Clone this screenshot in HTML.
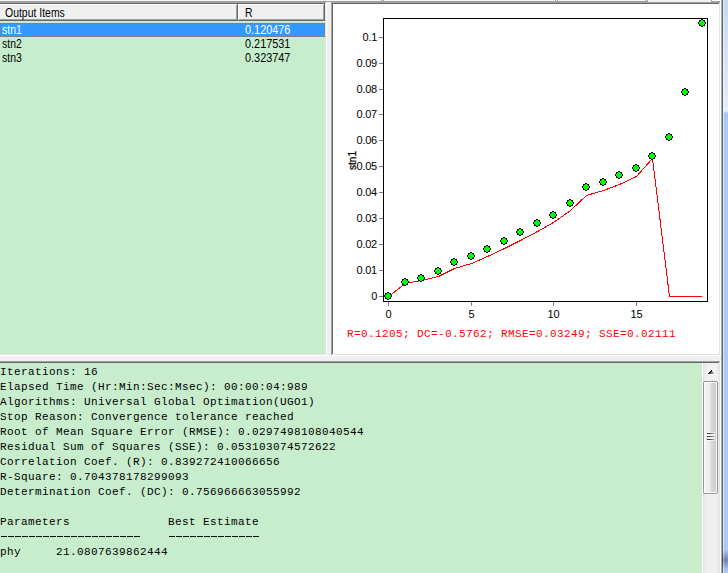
<!DOCTYPE html>
<html><head><meta charset="utf-8"><title>Output</title>
<style>
html,body{margin:0;padding:0;}
body{width:728px;height:573px;overflow:hidden;background:#f0f0f0;position:relative;font-family:"Liberation Sans",sans-serif;}
div{position:absolute;}
.ls{font-family:"Liberation Sans",sans-serif;font-size:11px;line-height:14px;white-space:pre;color:#000;transform-origin:0 0;transform:scale(0.99,1.13);}
.hd{transform:scale(0.95,1.13);}
.nm{transform:scale(0.95,1.13);}
.mono{font-family:"Liberation Mono",monospace;font-size:11px;line-height:15px;letter-spacing:0.4px;white-space:pre;color:#000;margin:0;}
svg{position:absolute;left:0;top:0;}
svg text{font-family:"Liberation Sans",sans-serif;font-size:11px;fill:#000;}
</style></head><body>

<div style="left:0px;top:0px;width:648px;height:1px;background:#f6f6f6"></div>
<div style="left:648px;top:0px;width:80px;height:2px;background:#f0f0f0"></div>
<div style="left:0px;top:1px;width:648px;height:1px;background:#a0a0a0"></div>
<div style="left:648px;top:1px;width:80px;height:1px;background:#f0f0f0"></div>
<div style="left:381px;top:0px;width:1px;height:1px;background:#9a9a9a"></div>
<div style="left:383px;top:0px;width:1px;height:1px;background:#9a9a9a"></div>
<div style="left:555px;top:0px;width:1px;height:1px;background:#9a9a9a"></div>
<div style="left:557px;top:0px;width:1px;height:1px;background:#9a9a9a"></div>
<div style="left:645px;top:0px;width:1px;height:1px;background:#9a9a9a"></div>
<div style="left:647px;top:0px;width:1px;height:2px;background:#9a9a9a"></div>
<div style="left:711px;top:0px;width:1px;height:1px;background:#a0a0a0"></div>
<div style="left:711px;top:1px;width:9px;height:1px;background:#a0a0a0"></div>
<div style="left:712px;top:0px;width:9px;height:1px;background:#ffffff"></div>
<div style="left:720px;top:1px;width:1px;height:1px;background:#ffffff"></div>
<div style="left:0px;top:2px;width:327px;height:1px;background:#a0a0a0"></div>
<div style="left:0px;top:3px;width:326px;height:1px;background:#696969"></div>
<div style="left:0px;top:4px;width:325px;height:350px;background:#c7edcc"></div>
<div style="left:325px;top:3px;width:1px;height:352px;background:#e3e3e3"></div>
<div style="left:326px;top:2px;width:1px;height:354px;background:#ffffff"></div>
<div style="left:0px;top:354px;width:326px;height:1px;background:#e3e3e3"></div>
<div style="left:0px;top:355px;width:327px;height:1px;background:#ffffff"></div>
<div style="left:0px;top:4px;width:238px;height:17px;background:#f0f0f0"></div>
<div style="left:0px;top:4px;width:237px;height:1px;background:#ffffff"></div>
<div style="left:0px;top:19px;width:237px;height:1px;background:#a0a0a0"></div>
<div style="left:236px;top:5px;width:1px;height:15px;background:#a0a0a0"></div>
<div style="left:0px;top:20px;width:238px;height:1px;background:#696969"></div>
<div style="left:237px;top:4px;width:1px;height:17px;background:#696969"></div>
<div style="left:238px;top:4px;width:87px;height:17px;background:#f0f0f0"></div>
<div style="left:238px;top:4px;width:86px;height:1px;background:#ffffff"></div>
<div style="left:238px;top:4px;width:1px;height:16px;background:#ffffff"></div>
<div style="left:239px;top:19px;width:85px;height:1px;background:#a0a0a0"></div>
<div style="left:323px;top:5px;width:1px;height:15px;background:#a0a0a0"></div>
<div style="left:238px;top:20px;width:87px;height:1px;background:#696969"></div>
<div style="left:324px;top:4px;width:1px;height:17px;background:#696969"></div>
<div class="ls hd" style="left:5px;top:5px;">Output Items</div>
<div class="ls hd" style="left:245px;top:5px;">R</div>
<div style="left:0px;top:23px;width:325px;height:14px;background:#3399ff"></div>
<svg width="325" height="40" style="left:0;top:0" shape-rendering="crispEdges"><defs><pattern id="chk" x="0" y="0" width="2" height="2" patternUnits="userSpaceOnUse"><rect x="1" y="0" width="1" height="1" fill="#cc6600"/><rect x="0" y="1" width="1" height="1" fill="#cc6600"/></pattern></defs><path fill="url(#chk)" fill-rule="evenodd" d="M0 23h325v14h-325z M1 24h323v12h-323z"/></svg>
<div class="ls nm" style="left:2px;top:22px;color:#fff">stn1</div>
<div class="ls" style="left:245px;top:22px;color:#fff">0.120476</div>
<div class="ls nm" style="left:2px;top:36px;color:#000">stn2</div>
<div class="ls" style="left:245px;top:36px;color:#000">0.217531</div>
<div class="ls nm" style="left:2px;top:50px;color:#000">stn3</div>
<div class="ls" style="left:245px;top:50px;color:#000">0.323747</div>
<div style="left:331px;top:2px;width:389px;height:1px;background:#a0a0a0"></div>
<div style="left:331px;top:2px;width:1px;height:354px;background:#a0a0a0"></div>
<div style="left:332px;top:3px;width:388px;height:1px;background:#696969"></div>
<div style="left:332px;top:3px;width:1px;height:352px;background:#696969"></div>
<div style="left:333px;top:4px;width:386px;height:350px;background:#ffffff"></div>
<div style="left:719px;top:3px;width:1px;height:352px;background:#e3e3e3"></div>
<div style="left:332px;top:354px;width:388px;height:1px;background:#e3e3e3"></div>
<div style="left:720px;top:1px;width:1px;height:355px;background:#ffffff"></div>
<div style="left:331px;top:355px;width:390px;height:1px;background:#ffffff"></div>
<svg width="728" height="360" viewBox="0 0 728 360">
<g shape-rendering="crispEdges">
<rect x="383.5" y="18.5" width="324" height="283" fill="none" stroke="#000" stroke-width="1"/>
<rect x="379" y="296" width="4" height="1" fill="#808080"/>
<rect x="379" y="270" width="4" height="1" fill="#808080"/>
<rect x="379" y="244" width="4" height="1" fill="#808080"/>
<rect x="379" y="218" width="4" height="1" fill="#808080"/>
<rect x="379" y="192" width="4" height="1" fill="#808080"/>
<rect x="379" y="166" width="4" height="1" fill="#808080"/>
<rect x="379" y="140" width="4" height="1" fill="#808080"/>
<rect x="379" y="114" width="4" height="1" fill="#808080"/>
<rect x="379" y="89" width="4" height="1" fill="#808080"/>
<rect x="379" y="63" width="4" height="1" fill="#808080"/>
<rect x="379" y="37" width="4" height="1" fill="#808080"/>
<rect x="388" y="302" width="1" height="4" fill="#808080"/>
<rect x="471" y="302" width="1" height="4" fill="#808080"/>
<rect x="553" y="302" width="1" height="4" fill="#808080"/>
<rect x="636" y="302" width="1" height="4" fill="#808080"/>
<polyline fill="none" stroke="#ff0000" stroke-width="1" points="388.5,296.5 405.5,283.5 421.5,280.5 438.5,276.5 454.5,268.5 471.5,263.5 487.5,256.5 504.5,248.5 520.5,240.5 537.5,231.5 553.5,222.5 570.5,210.5 586.5,195.5 603.5,190.5 619.5,184.5 636.5,176.5 652.5,158.5 669.5,296.5 701.5,296.5"/>
</g>
<defs><g id="m" shape-rendering="crispEdges">
<path fill="#000" d="M3 0h2v1h2v2h1v2h-1v2h-2v1h-2v-1h-2v-2h-1v-2h1v-2h2z"/>
<path fill="#00ff00" d="M3 1h2v1h1v1h1v2h-1v1h-1v1h-2v-1h-1v-1h-1v-2h1v-1h1z"/>
</g></defs>
<use href="#m" x="384" y="292"/>
<use href="#m" x="401" y="278"/>
<use href="#m" x="417" y="274"/>
<use href="#m" x="434" y="267"/>
<use href="#m" x="450" y="258"/>
<use href="#m" x="467" y="252"/>
<use href="#m" x="483" y="245"/>
<use href="#m" x="500" y="237"/>
<use href="#m" x="516" y="228"/>
<use href="#m" x="533" y="219"/>
<use href="#m" x="549" y="211"/>
<use href="#m" x="566" y="199"/>
<use href="#m" x="582" y="183"/>
<use href="#m" x="599" y="178"/>
<use href="#m" x="615" y="171"/>
<use href="#m" x="632" y="164"/>
<use href="#m" x="648" y="152"/>
<use href="#m" x="665" y="133"/>
<use href="#m" x="681" y="88"/>
<use href="#m" x="698" y="19"/>
<text x="377" y="300" text-anchor="end" letter-spacing="-0.25">0</text>
<text x="377" y="274" text-anchor="end" letter-spacing="-0.25">0.01</text>
<text x="377" y="248" text-anchor="end" letter-spacing="-0.25">0.02</text>
<text x="377" y="222" text-anchor="end" letter-spacing="-0.25">0.03</text>
<text x="377" y="196" text-anchor="end" letter-spacing="-0.25">0.04</text>
<text x="377" y="170" text-anchor="end" letter-spacing="-0.25">0.05</text>
<text x="377" y="144" text-anchor="end" letter-spacing="-0.25">0.06</text>
<text x="377" y="118" text-anchor="end" letter-spacing="-0.25">0.07</text>
<text x="377" y="93" text-anchor="end" letter-spacing="-0.25">0.08</text>
<text x="377" y="67" text-anchor="end" letter-spacing="-0.25">0.09</text>
<text x="377" y="41" text-anchor="end" letter-spacing="-0.25">0.1</text>
<text x="388.5" y="318" text-anchor="middle">0</text>
<text x="471.5" y="318" text-anchor="middle">5</text>
<text x="553.5" y="318" text-anchor="middle">10</text>
<text x="636.5" y="318" text-anchor="middle">15</text>
<text transform="translate(356,160.5) rotate(-90)" text-anchor="middle" textLength="19" lengthAdjust="spacingAndGlyphs" stroke="#000" stroke-width="0.25">stn1</text>
<text x="347" y="337" style="font-family:'Liberation Mono',monospace;font-size:11px;letter-spacing:0.4px;fill:#ff0000" xml:space="preserve">R=0.1205; DC=-0.5762; RMSE=0.03249; SSE=0.02111</text>
</svg>
<div style="left:0px;top:361px;width:721px;height:1px;background:#a0a0a0"></div>
<div style="left:0px;top:362px;width:720px;height:1px;background:#696969"></div>
<div style="left:0px;top:363px;width:702px;height:210px;background:#c7edcc"></div>
<div style="left:719px;top:362px;width:1px;height:211px;background:#e3e3e3"></div>
<div style="left:720px;top:361px;width:1px;height:212px;background:#ffffff"></div>
<pre class="mono" style="position:absolute;left:0px;top:365px;">Iterations: 16
Elapsed Time (Hr:Min:Sec:Msec): 00:00:04:989
Algorithms: Universal Global Optimation(UGO1)
Stop Reason: Convergence tolerance reached
Root of Mean Square Error (RMSE): 0.0297498108040544
Residual Sum of Squares (SSE): 0.053103074572622
Correlation Coef. (R): 0.839272410066656
R-Square: 0.704378178299093
Determination Coef. (DC): 0.756966663055992

Parameters              Best Estimate

phy     21.0807639862444</pre>
<div style="left:0px;top:536px;width:140px;height:1px;background:repeating-linear-gradient(to right,transparent 0,transparent 1px,#111 1px,#111 7px)"></div>
<div style="left:168px;top:536px;width:91px;height:1px;background:repeating-linear-gradient(to right,transparent 0,transparent 1px,#111 1px,#111 7px)"></div>
<div style="left:702px;top:363px;width:17px;height:210px;background:linear-gradient(to right,#ffffff 0,#ffffff 1px,#e3e3e3 1px,#e9e9e9 2.5px,#eeeeee 4px,#f0f0f0 5px,#f0f0f0 14px,#ececec 15.5px,#e8e8e8 17px)"></div>
<svg width="728" height="573" viewBox="0 0 728 573" shape-rendering="crispEdges" style="pointer-events:none"><rect x="711" y="369" width="1" height="1" fill="#fff" fill-opacity="0.85"/><rect x="710" y="370" width="1" height="1" fill="#fff" fill-opacity="0.85"/><rect x="712" y="370" width="1" height="1" fill="#fff" fill-opacity="0.85"/><rect x="709" y="371" width="1" height="1" fill="#fff" fill-opacity="0.85"/><rect x="713" y="371" width="1" height="1" fill="#fff" fill-opacity="0.85"/><rect x="708" y="372" width="1" height="1" fill="#fff" fill-opacity="0.85"/><rect x="714" y="372" width="1" height="1" fill="#fff" fill-opacity="0.85"/><rect x="707" y="373" width="1" height="1" fill="#fff" fill-opacity="0.85"/><rect x="715" y="373" width="1" height="1" fill="#fff" fill-opacity="0.85"/><rect x="708" y="374" width="1" height="1" fill="#fff" fill-opacity="0.85"/><rect x="709" y="374" width="1" height="1" fill="#fff" fill-opacity="0.85"/><rect x="710" y="374" width="1" height="1" fill="#fff" fill-opacity="0.85"/><rect x="711" y="374" width="1" height="1" fill="#fff" fill-opacity="0.85"/><rect x="712" y="374" width="1" height="1" fill="#fff" fill-opacity="0.85"/><rect x="713" y="374" width="1" height="1" fill="#fff" fill-opacity="0.85"/><rect x="714" y="374" width="1" height="1" fill="#fff" fill-opacity="0.85"/><rect x="711" y="370" width="1" height="1" fill="#000"/><rect x="710" y="371" width="1" height="1" fill="#000"/><rect x="711" y="371" width="1" height="1" fill="#4a4a4a"/><rect x="712" y="371" width="1" height="1" fill="#b0b0b0"/><rect x="709" y="372" width="1" height="1" fill="#000"/><rect x="710" y="372" width="1" height="1" fill="#333"/><rect x="711" y="372" width="1" height="1" fill="#6a6a6a"/><rect x="712" y="372" width="1" height="1" fill="#969696"/><rect x="713" y="372" width="1" height="1" fill="#c4c4c4"/><rect x="708" y="373" width="1" height="1" fill="#111"/><rect x="709" y="373" width="1" height="1" fill="#3a3a3a"/><rect x="710" y="373" width="1" height="1" fill="#5c5c5c"/><rect x="711" y="373" width="1" height="1" fill="#7a7a7a"/><rect x="712" y="373" width="1" height="1" fill="#969696"/><rect x="713" y="373" width="1" height="1" fill="#b2b2b2"/><rect x="714" y="373" width="1" height="1" fill="#c8c8c8"/></svg>
<div style="left:703px;top:381px;width:13px;height:111px;border:1px solid #979797;border-radius:2px;background:linear-gradient(to right,#f5f5f5 0,#ececee 6px,#dadade 7px,#c9c9cf 13px);box-shadow:inset 0 0 0 1px rgba(255,255,255,0.85)"></div>
<div style="left:707px;top:432px;width:8px;height:1px;background:rgba(255,255,255,0.6)"></div>
<div style="left:707px;top:433px;width:7px;height:1px;background:linear-gradient(to right,#222,#666 60%,#aaa)"></div>
<div style="left:707px;top:434px;width:8px;height:1px;background:rgba(255,255,255,0.6)"></div>
<div style="left:707px;top:435px;width:8px;height:1px;background:rgba(255,255,255,0.6)"></div>
<div style="left:707px;top:436px;width:7px;height:1px;background:linear-gradient(to right,#222,#666 60%,#aaa)"></div>
<div style="left:707px;top:437px;width:8px;height:1px;background:rgba(255,255,255,0.6)"></div>
<div style="left:707px;top:438px;width:8px;height:1px;background:rgba(255,255,255,0.6)"></div>
<div style="left:707px;top:439px;width:7px;height:1px;background:linear-gradient(to right,#222,#666 60%,#aaa)"></div>
<div style="left:707px;top:440px;width:8px;height:1px;background:rgba(255,255,255,0.6)"></div>
<div style="left:721px;top:0px;width:1px;height:573px;background:#a9abae"></div>
<div style="left:722px;top:0;width:1px;height:573px;background:linear-gradient(to bottom,#5b6676 0,#5b6676 550px,#3c4654 560px,#5b6676 570px)"></div>
<div style="left:723px;top:0;width:5px;height:573px;background:linear-gradient(to bottom,#c4d9f3 0px,#d3e2f6 50px,#e4edf9 111px,#aacbf0 113px,#aacbf0 550px,#7d97bd 557px,#6c86ab 560px,#7d97bd 563px,#a6c6ec 569px,#aacbf0 573px)"></div>
<div style="left:723px;top:0;width:1px;height:573px;background:linear-gradient(to bottom,#e3edfa 0px,#eef4fc 111px,#d4e5f9 113px,#d4e5f9 550px,#9fb4d2 560px,#d4e5f9 570px)"></div>
</body></html>
